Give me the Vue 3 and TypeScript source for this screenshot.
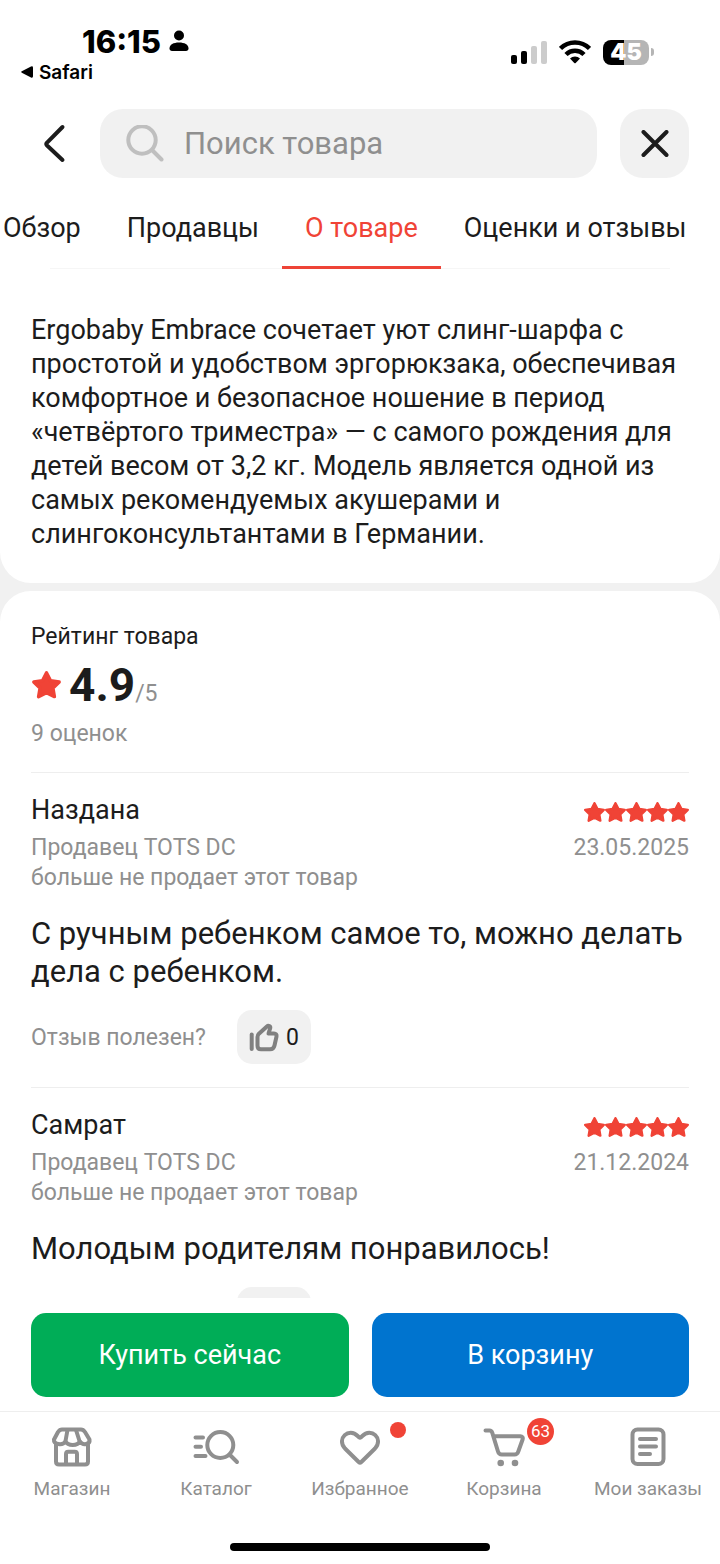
<script setup lang="ts">
import { ref } from 'vue'

interface Review {
  author: string
  date: string
  text: string
  likes: number
}

interface NavItem {
  id: string
  label: string
}

const query = ref('')
const activeTab = ref('О товаре')
const tabs: string[] = ['Обзор', 'Продавцы', 'О товаре', 'Оценки и отзывы']

const reviews = ref<Review[]>([
  {
    author: 'Наздана',
    date: '23.05.2025',
    text: 'С ручным ребенком самое то, можно делать дела с ребенком.',
    likes: 0,
  },
  {
    author: 'Самрат',
    date: '21.12.2024',
    text: 'Молодым родителям понравилось!',
    likes: 0,
  },
])

const navItems: NavItem[] = [
  { id: 'shop', label: 'Магазин' },
  { id: 'catalog', label: 'Каталог' },
  { id: 'favorites', label: 'Избранное' },
  { id: 'cart', label: 'Корзина' },
  { id: 'orders', label: 'Мои заказы' },
]

const starPath = 'M15 3.5l3.700 7.200 7.800 1.100-5.600 5.600 1.300 7.700L15 21.500l-7.200 3.600 1.300-7.700-5.600-5.600 7.800-1.100z'
</script>

<template>
  <div class="app">
    <div class="status">
      <div class="status-left">
        <div class="time">
          16:15
          <svg width="20" height="22" viewBox="0 0 20 22" aria-hidden="true">
            <circle cx="10" cy="5.500" r="5" />
            <path d="M0.500 18.500C0.500 14.500 4.500 12.500 10 12.500s9.500 2 9.500 6c0 1.500-1 2.500-2.500 2.500H3c-1.500 0-2.500-1-2.500-2.500z" />
          </svg>
        </div>
        <a class="return" href="#safari">
          <svg width="12" height="12" viewBox="0 0 12 12" aria-hidden="true">
            <path d="M0.800 5.300L10 0.500q2-.8 2 1.200v8.600q0 2-2 1.200L0.800 6.700q-1.200-.7 0-1.400z" />
          </svg>
          Safari
        </a>
      </div>
      <div class="status-right">
        <svg width="36" height="24" viewBox="0 0 36 24" aria-hidden="true">
          <rect x="0" y="15" width="6" height="9" rx="2" />
          <rect x="10" y="11" width="6" height="13" rx="2" />
          <rect x="20" y="6" width="6" height="18" rx="2" fill="#ccc" />
          <rect x="30" y="1" width="6" height="23" rx="2" fill="#ccc" />
        </svg>
        <svg width="32" height="24" viewBox="0 0 32 24" aria-hidden="true">
          <g fill="none" stroke="#000" stroke-width="4.500">
            <path d="M1.500 8.500a20.500 20.500 0 0 1 29 0" />
            <path d="M7 14.500a12.700 12.700 0 0 1 18 0" />
          </g>
          <path d="M11 18.500a7 7 0 0 1 10 0L16.700 23q-.7.700-1.400 0z" />
        </svg>
        <div class="battery"><span class="level">45</span><span class="tip"></span></div>
      </div>
    </div>

    <header class="header">
      <button class="back" type="button" aria-label="Назад">
        <svg width="24" height="40" viewBox="0 0 24 40" aria-hidden="true">
          <path d="M20.500 3L4.800 18.800q-1 1.200 0 2.400L20.500 36" />
        </svg>
      </button>
      <label class="search">
        <svg width="38" height="38" viewBox="0 0 38 38" aria-hidden="true">
          <circle cx="16" cy="15" r="13.700" />
          <path d="M26.500 25.500L35.500 34.500" />
        </svg>
        <input v-model="query" type="text" placeholder="Поиск товара" aria-label="Поиск товара" />
      </label>
      <button class="close" type="button" aria-label="Закрыть">
        <svg width="28" height="28" viewBox="0 0 28 28" aria-hidden="true">
          <path d="M2.500 2l23 23M25.500 2l-23 23" />
        </svg>
      </button>
    </header>

    <nav class="tabs" aria-label="Разделы">
      <button
        v-for="tab in tabs"
        :key="tab"
        type="button"
        class="tab"
        :class="{ active: tab === activeTab }"
        @click="activeTab = tab"
      >
        {{ tab }}
      </button>
    </nav>

    <main class="content">
      <section class="card about">
        <p>
          Ergobaby Embrace сочетает уют слинг-шарфа с простотой и удобством эргорюкзака,
          обеспечивая комфортное и безопасное ношение в период «четвёртого триместра» — с самого
          рождения для детей весом от 3,2 кг. Модель является одной из самых рекомендуемых
          акушерами и слингоконсультантами в Германии.
        </p>
      </section>

      <section class="card ratings">
        <div class="summary">
          <h2>Рейтинг товара</h2>
          <div class="score">
            <svg class="star" width="31" height="31" viewBox="1 1 28 28" aria-hidden="true">
              <path :d="starPath" />
            </svg>
            <strong>4.9</strong><span>/5</span>
          </div>
          <p class="count">9 оценок</p>
        </div>

        <article v-for="review in reviews" :key="review.author" class="review">
          <div class="review-head">
            <h3>{{ review.author }}</h3>
            <div class="stars" role="img" aria-label="5 из 5">
              <svg v-for="n in 5" :key="n" class="star" width="21" height="21" viewBox="2 2 26 26" aria-hidden="true">
                <path :d="starPath" />
              </svg>
            </div>
          </div>
          <div class="meta">
            <p>Продавец TOTS DC<br />больше не продает этот товар</p>
            <time>{{ review.date }}</time>
          </div>
          <p class="text">{{ review.text }}</p>
          <div class="useful">
            <span>Отзыв полезен?</span>
            <button type="button" aria-label="Полезный отзыв" @click="review.likes++">
              <svg width="30" height="30" viewBox="0 0 30 30" aria-hidden="true">
                <path d="M2.700 12.500v14.500" />
                <path d="M8.500 15c0-1.500.4-2.300 1.400-3.300l8-7.300c1.500-1.300 3.800-.2 3.300 1.800L19.500 11.500h5.500c1.900 0 2.900 1.300 2.500 3l-2 9c-.6 2.500-1.900 3.800-4.300 3.800H12c-2.200 0-3.500-1.300-3.500-3.500z" />
              </svg>
              {{ review.likes }}
            </button>
          </div>
        </article>
      </section>
    </main>

    <footer class="footer">
      <div class="actions">
        <button type="button" class="buy">Купить сейчас</button>
        <button type="button" class="add">В корзину</button>
      </div>
      <nav class="bottom-nav" aria-label="Основное меню">
        <a v-for="item in navItems" :key="item.id" :href="'#' + item.id">
          <span class="nav-icon">
            <svg width="48" height="48" viewBox="0 0 48 48" aria-hidden="true">
              <template v-if="item.id === 'shop'">
                <path d="M14 6.500h19c2 0 3 1 4 2.500l4.500 7.500c.8 5-6.500 6.500-9.500 2-2.500 4.500-12 4.500-14.500 0-3 4.500-12 3-11.500-2L10 9c1-1.500 2-2.500 4-2.500z" />
                <path d="M19.500 7l-2 11M28 7l3.500 11" />
                <path d="M8 21.500v17c0 2 1 3 3 3h26c2 0 3-1 3-3v-17" />
                <path d="M18 41v-10c0-1.500.8-2.300 2.300-2.300h6.400c1.500 0 2.300.8 2.300 2.300v10" />
              </template>
              <template v-else-if="item.id === 'catalog'">
                <circle cx="28.300" cy="22" r="13" />
                <path d="M38 32l7 7M3.500 14.500h7.500M3.500 23.700h5.500M3.500 33h10" />
              </template>
              <template v-else-if="item.id === 'favorites'">
                <path d="M22.700 39L9 25.500c-9-10 4-21.500 12.700-12.500l1.300 1.300q1 .8 2 0l1.300-1.300C35 4 48 15.500 39 25.500L25.300 39q-1.300 1.200-2.600 0z" />
              </template>
              <template v-else-if="item.id === 'cart'">
                <path d="M5.500 7.500h4c1.500 0 2.300.8 2.800 2.300l5.700 18.700c.6 2 1.800 3 3.800 3h12.700c2 0 3.200-1 3.800-3l4.300-12c.6-2-.3-3.300-2.300-3.300H14" />
                <circle class="dot" cx="20.700" cy="40" r="3.300" />
                <circle class="dot" cx="35" cy="40" r="3.300" />
              </template>
              <template v-else>
                <rect x="8.500" y="6.500" width="31" height="34.500" rx="5" />
                <path d="M16 16h16M16 23.500h16M16 31h10" />
              </template>
            </svg>
            <i v-if="item.id === 'favorites'" class="marker"></i>
            <b v-if="item.id === 'cart'" class="badge">63</b>
          </span>
          <span>{{ item.label }}</span>
        </a>
      </nav>
      <div class="home-indicator"></div>
    </footer>
  </div>
</template>

<style>
body {
  background: #fff;
}
</style>

<style scoped>
* {
  box-sizing: border-box;
}

.app {
  display: flex;
  flex-direction: column;
  height: 100vh;
  overflow: hidden;
  background: #fff;
  color: #1c1c1c;
  font-family: Roboto, "Noto Sans", sans-serif;
}

button,
input {
  border: 0;
  padding: 0;
  background: none;
  color: inherit;
  font: inherit;
}

a {
  color: inherit;
  text-decoration: none;
}

h2,
h3,
p {
  margin: 0;
  font-weight: 400;
}

svg {
  display: block;
  flex: none;
}

.status {
  display: flex;
  justify-content: space-between;
  flex: none;
  height: 109px;
  padding: 23px 66px 0 21px;
  color: #000;
  font-family: Inter, sans-serif;
}

.time {
  display: flex;
  align-items: center;
  gap: 8px;
  height: 36px;
  padding-left: 61px;
  font-size: 31px;
  font-weight: 800;
}

.return {
  display: flex;
  align-items: center;
  gap: 6px;
  height: 26px;
  font-size: 19px;
  font-weight: 600;
}

.status-right {
  display: flex;
  align-items: center;
  gap: 12px;
  height: 58px;
}

.battery {
  display: flex;
  align-items: center;
  gap: 2px;
}

.level {
  width: 46px;
  height: 25px;
  border-radius: 8px;
  background: linear-gradient(90deg, #000 45%, #b5b5b5 45%);
  color: #fff;
  font-size: 23px;
  font-weight: 900;
  line-height: 25px;
  text-align: center;
}

.tip {
  width: 3px;
  height: 8px;
  border-radius: 0 4px 4px 0;
  background: #b5b5b5;
}

.header {
  display: flex;
  align-items: center;
  flex: none;
  padding: 0 31px 0 42px;
}

.back {
  width: 58px;
}

.back svg,
.close svg {
  fill: none;
  stroke: #1c1c1c;
  stroke-width: 4;
  stroke-linecap: round;
  stroke-linejoin: round;
}

.search {
  display: flex;
  align-items: center;
  flex: 1;
  gap: 20px;
  min-width: 0;
  height: 69px;
  margin-right: 23px;
  padding: 0 26px;
  border-radius: 23px;
  background: #f1f1f1;
}

.search svg {
  fill: none;
  stroke: #bfbfbf;
  stroke-width: 4;
  stroke-linecap: round;
}

.search input {
  flex: 1;
  min-width: 0;
  font-size: 31px;
  outline: none;
}

.search input::placeholder {
  color: #8f8f8f;
  opacity: 1;
}

.close {
  display: flex;
  align-items: center;
  justify-content: center;
  width: 69px;
  height: 69px;
  border-radius: 23px;
  background: #f1f1f1;
}

.tabs {
  display: flex;
  flex: none;
  height: 91px;
  margin-left: -20px;
  overflow: hidden;
  background: linear-gradient(#f6f6f6, #f6f6f6) 70px 90px / calc(100% - 120px) 1px no-repeat;
}

.tab {
  flex: none;
  padding: 12px 23px 0;
  border-bottom: 3px solid transparent;
  font-size: 27px;
  line-height: 32px;
  white-space: nowrap;
}

.active {
  border-color: #ee4437;
  color: #f04336;
}

.content {
  flex: 1;
  min-height: 0;
  overflow: hidden;
  background: #f1f1f1;
}

.card {
  padding: 0 31px;
  background: #fff;
}

.about {
  padding-top: 44px;
  padding-bottom: 32px;
  border-radius: 0 0 31px 31px;
  font-size: 27px;
  line-height: 34px;
}

.ratings {
  margin-top: 8px;
  padding-top: 31px;
  border-radius: 31px 31px 0 0;
}

.summary h2 {
  font-size: 23px;
  line-height: 30px;
}

.score {
  display: flex;
  align-items: baseline;
  height: 67px;
  line-height: 67px;
}

.star {
  fill: #f04336;
  stroke: #f04336;
  stroke-width: 3;
  stroke-linejoin: round;
}

.score .star {
  align-self: center;
  margin-right: 7px;
}

.score strong {
  font-size: 46px;
}

.score span,
.count,
.meta,
.useful > span {
  color: #8f8f8f;
  font-size: 23px;
}

.count {
  line-height: 30px;
}

.review {
  margin-top: 23px;
  padding-top: 20px;
  border-top: 1px solid #eee;
}

.review-head,
.meta {
  display: flex;
  justify-content: space-between;
}

.review h3 {
  font-size: 27px;
  line-height: 34px;
}

.stars {
  display: flex;
  align-items: center;
  padding-top: 4px;
}

.meta {
  padding-top: 6px;
  line-height: 30px;
}

.text {
  padding: 22px 0 19px;
  font-size: 31px;
  line-height: 38px;
}

.useful {
  display: flex;
  align-items: center;
  gap: 31px;
}

.useful button {
  display: flex;
  align-items: center;
  gap: 7px;
  height: 54px;
  padding: 0 12px;
  border-radius: 15px;
  background: #f1f1f1;
  font-size: 23px;
}

.useful svg {
  fill: none;
  stroke: #808080;
  stroke-width: 4;
  stroke-linecap: round;
  stroke-linejoin: round;
}

.footer {
  flex: none;
  background: #fff;
}

.actions {
  display: flex;
  gap: 23px;
  padding: 15px 31px 14px;
}

.actions button {
  flex: 1;
  height: 84px;
  border-radius: 15px;
  color: #fff;
  font-size: 27px;
}

.actions .buy {
  background: #00ad57;
}

.actions .add {
  background: #0074cf;
}

.bottom-nav {
  display: grid;
  grid-template-columns: repeat(5, 1fr);
  border-top: 1px solid #eee;
}

.bottom-nav a {
  display: flex;
  flex-direction: column;
  align-items: center;
  gap: 6px;
  padding: 11px 0 42px;
  color: #8f8f8f;
  font-size: 19px;
  line-height: 24px;
  white-space: nowrap;
}

.nav-icon {
  position: relative;
}

.nav-icon svg {
  fill: none;
  stroke: #8f8f8f;
  stroke-width: 4;
  stroke-linecap: round;
  stroke-linejoin: round;
}

.nav-icon .dot {
  fill: #8f8f8f;
  stroke: none;
}

.marker {
  position: absolute;
  top: -1px;
  left: 54px;
  width: 16px;
  height: 16px;
  border-radius: 50%;
  background: #f04336;
}

.badge {
  position: absolute;
  top: -5px;
  left: 47px;
  width: 27px;
  height: 27px;
  border-radius: 50%;
  background: #f04336;
  color: #fff;
  font-size: 17px;
  font-weight: 400;
  line-height: 26px;
  text-align: center;
}

.home-indicator {
  width: 36%;
  height: 8px;
  margin: 0 auto 13px;
  border-radius: 4px;
  background: #000;
}
</style>
